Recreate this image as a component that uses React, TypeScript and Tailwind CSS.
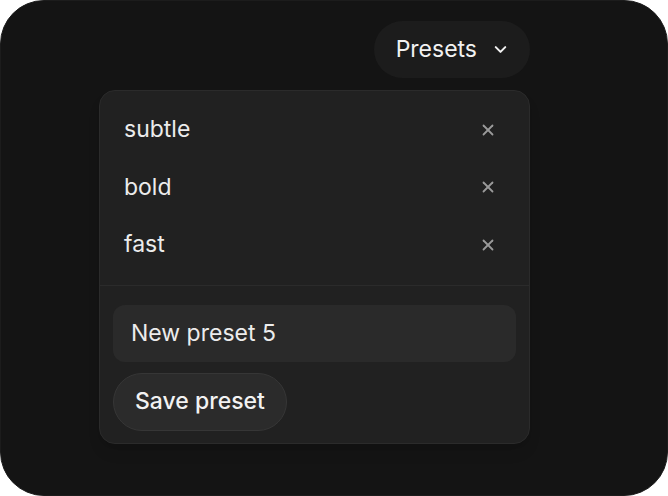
import { ChevronDown, X } from 'lucide-react'

const presets = ['subtle', 'bold', 'fast']

export default function App() {
  return (
    <div className="h-[496px] w-[668px] bg-white" style={{ fontFamily: 'Inter, "Noto Sans", sans-serif' }}>
      <div className="flex h-full w-full flex-col items-end rounded-[44px] border border-[#1c1c1c] bg-[#141414] pr-[137px] pt-[20px]">
        {/* Trigger */}
        <button className="flex h-[57px] items-center gap-[14px] rounded-full bg-[#1c1c1c] pl-[22px] pr-[20px] text-[23px] text-[#f2f2f2]">
          Presets
          <ChevronDown className="h-[19px] w-[19px]" strokeWidth={2.6} />
        </button>

        {/* Menu */}
        <div className="mt-[12px] flex w-[431px] flex-col rounded-[16px] border border-[#2b2b2b] bg-[#212121] shadow-lg">
          <div className="px-[7px] pb-[11px] pt-[10px]">
            {presets.map(name => (
              <div key={name} className="flex h-[57.5px] items-center justify-between pl-[17px] pr-[25px]">
                <span className="-mt-px text-[23px] text-[#ececec]">{name}</span>
                <X className="h-[18px] w-[18px] text-[#9a9a9a]" strokeWidth={2.4} />
              </div>
            ))}
          </div>
          <div className="h-px bg-[#2b2b2b]" />
          <div className="flex flex-col items-start gap-[11px] px-[13px] pb-[12px] pt-[19px]">
            <input
              readOnly
              value="New preset 5"
              className="h-[57px] w-full rounded-[12px] bg-[#2a2a2a] px-[18px] text-[23px] text-[#ececec] outline-none"
            />
            <button className="h-[58px] rounded-full border border-[#363636] bg-[#2b2b2b] px-[21px] text-[23px] font-medium text-[#f2f2f2]">
              Save preset
            </button>
          </div>
        </div>
      </div>
    </div>
  )
}
